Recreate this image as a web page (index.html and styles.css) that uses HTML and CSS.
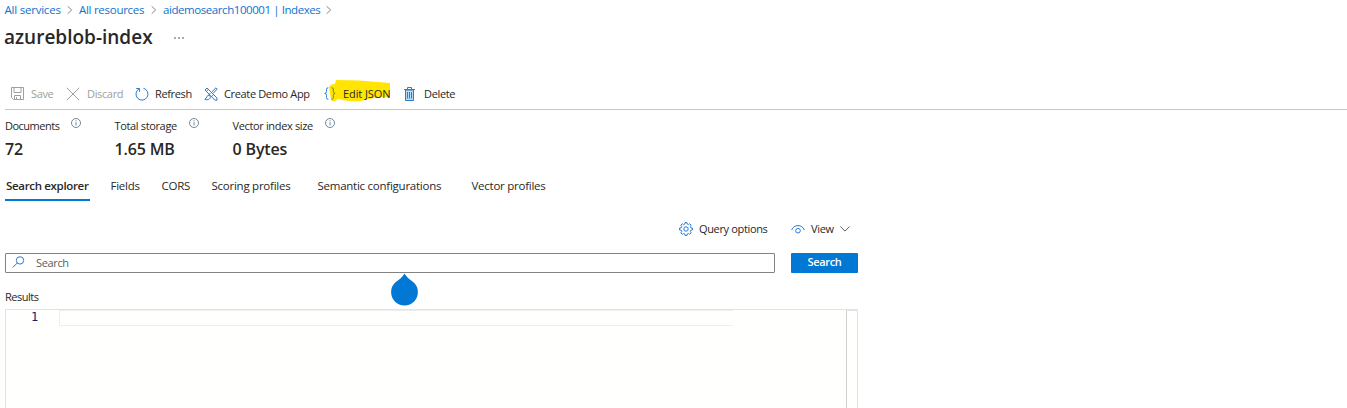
FILE: index.html
```html
<!DOCTYPE html>
<html lang="en">
<head>
<meta charset="utf-8">
<title>azureblob-index</title>
<link rel="stylesheet" href="styles.css">
</head>
<body>
<nav class="crumbs">
  <a class="c1">All services</a><svg width="6" height="8" viewBox="0 0 6 8"><path d="M.7 .3 4.7 4 .7 7.7"/></svg>
  <a class="c2">All resources</a><svg width="6" height="8" viewBox="0 0 6 8"><path d="M.7 .3 4.7 4 .7 7.7"/></svg>
  <a class="c3">aidemosearch100001 | Indexes</a><svg width="6" height="8" viewBox="0 0 6 8"><path d="M.7 .3 4.7 4 .7 7.7"/></svg>
</nav>
<header class="heading"><h1>azureblob-index</h1><span class="more"><i></i><i></i><i></i></span></header>
<div class="toolbar">
  <span class="tool off"><svg width="13" height="13" viewBox="0 0 13 13"><path d="M.5.5h12v12h-10l-2-2zM3 .5v5h7v-5M3.500 12.500V8.500h6v4M5.500 10v2"/></svg></span>
  <span class="off save">Save</span>
  <span class="tool off"><svg width="14" height="14" viewBox="0 0 14 14"><path d="m.8.8 12.4 12.4M13.2.8.8 13.2"/></svg></span>
  <span class="off discard">Discard</span>
  <span class="tool"><svg width="14" height="14" viewBox="0 0 14 14"><path d="M8.500 1.300A6 6 0 1 1 4 1.900M1.200 1.500H4.600V4.900"/></svg></span>
  <span class="refresh">Refresh</span>
  <span class="tool tools"><svg width="14" height="14" viewBox="0 0 14 14"><path d="m1 3 2-2 9.800 9.800.3 2.400-2.400-.2zM4.300 2.500 2.600 4.200M12 .8 8 4.700M13.200 2 9.200 6.300M12 .8l1.200 1.200M5.100 8.100C2.800 8 3.200 10.800.8 12.400c2.900 1 5.800-.3 5.600-2.600M5.100 8.100l1.300 1.700M9.600 7.600 7.500 9.700M6.500 6 5 7.600"/></svg></span>
  <span class="demo">Create Demo App</span>
  <span class="tool json"><svg class="marker" width="63" height="24" viewBox="0 0 63 24"><path d="M8 0 31 .5 62 3V17Q46 17 33 21Q21 22 10 19Q6 23 3 20L1 7Q2 4 7 4Z"/></svg><svg width="13" height="13" viewBox="0 0 13 13"><path d="M4.300.7Q2.500.7 2.500 2.300v2.200Q2.500 6.400.7 6.400q1.800 0 1.800 2v2.200q0 1.700 1.800 1.700"/><path class="green" d="M7.500.7q1.800 0 1.800 1.600v2.200q0 1.900 1.800 1.900-1.800 0-1.800 2v2.200q0 1.700-1.800 1.700"/></svg></span>
  <span class="edit">Edit JSON</span>
  <span class="tool"><svg width="11" height="14" viewBox="0 0 11 14"><path class="bin" d="M1.500 3v10.500h8V3z"/><path d="M0 2.500h11M3.500 2.500v-2h4v2"/><path class="slats" d="M3.500 5v6.500M5.500 5v6.500M7.500 5v6.500"/></svg></span>
  <span class="delete">Delete</span>
</div>
<section class="stats">
  <div><div class="label"><span class="documents">Documents</span><svg width="10" height="10" viewBox="0 0 10 10"><circle cx="5" cy="5" r="4.5"/><path d="M5 4.2v3.3M5 2.3v1"/></svg></div><b>72</b></div>
  <div><div class="label"><span class="storage">Total storage</span><svg width="10" height="10" viewBox="0 0 10 10"><circle cx="5" cy="5" r="4.5"/><path d="M5 4.2v3.3M5 2.3v1"/></svg></div><b>1.65 MB</b></div>
  <div><div class="label"><span class="vector">Vector index size</span><svg width="10" height="10" viewBox="0 0 10 10"><circle cx="5" cy="5" r="4.5"/><path d="M5 4.2v3.3M5 2.3v1"/></svg></div><b>0 Bytes</b></div>
</section>
<nav class="tabs">
  <span class="active">Search explorer</span><span>Fields</span><span>CORS</span><span>Scoring profiles</span><span>Semantic configurations</span><span>Vector profiles</span>
</nav>
<main>
  <div class="options">
    <svg width="14" height="14" viewBox="0 0 14 14"><path d="M5.8 2 6 .6h2L8.2 2l1.3.6 1.2-.9 1.5 1.5-.9 1.2.5 1.4 1.6.2v2l-1.6.2-.5 1.4.9 1.2-1.500 1.500-1.200-.9-1.300.6-.2 1.400H6L5.800 12l-1.300-.6-1.200.9-1.500-1.500.9-1.200-.5-1.400L.6 8V6l1.600-.2.5-1.400-.9-1.200 1.500-1.500 1.200.9z"/><circle cx="7" cy="7" r="2.200"/></svg>
    <span class="query">Query options</span>
    <svg width="14" height="9" viewBox="0 0 14 9"><path d="M.6 5C1.800 2 4.200.6 7 .6S12.200 2 13.400 5"/><circle cx="7" cy="5.700" r="2.300"/></svg>
    <span class="view">View</span>
    <svg class="chev" width="10" height="6" viewBox="0 0 10 6"><path d="M.4.5 5 5.100 9.600.5"/></svg>
  </div>
  <div class="searchrow">
    <div class="box"><svg width="13" height="12" viewBox="0 0 13 12"><circle cx="8" cy="4.400" r="3.700"/><path d="M5.300 7 .6 11.500"/></svg><span>Search</span>
      <svg class="drop" width="28" height="33" viewBox="0 0 28 33"><path d="M14.500 .5C16 3.500 20 7 23.500 9.200A13.400 13.400 0 1 1 5.500 9.200C9 7 13 3.500 14.500 .5Z"/></svg></div>
    <div class="button">Search</div>
  </div>
  <div class="results"><span>Results</span></div>
  <div class="editor"><span class="line">1</span><span class="current"></span><span class="ruler"></span></div>
</main>
</body>
</html>
```
FILE: styles.css
```css
* { box-sizing: border-box; }
body { margin: 0; width: 1347px; height: 408px; overflow: hidden; background: #fff; color: #292827; font: 11.5px/16px "Open Sans", "Noto Sans", sans-serif; white-space: nowrap; }
svg { display: block; flex: none; fill: none; stroke: #2b7cd3; stroke-width: 1; overflow: visible; }
.crumbs { display: grid; grid-template-columns: 62.5px 12px 72px 12px 163px 6px; align-items: center; height: 20px; padding-left: 4.5px; color: #0f72cf; }
.crumbs svg { stroke: #888; }
.c1 { letter-spacing: -.22px; }
.c2 { letter-spacing: -.28px; }
.c3 { letter-spacing: -.43px; }
.heading { display: flex; align-items: center; height: 34px; padding-left: 4px; }
h1 { margin: 0; width: 170px; font-size: 19px; line-height: 34px; font-weight: 600; }
.more { display: flex; gap: 2px; padding-top: 2px; }
.more i { width: 2px; height: 2px; background: #aaa; }
.toolbar, .label, .options, .box, .button, .results { font-size: 11px; letter-spacing: -.35px; }
.toolbar { display: grid; grid-template-columns: 20px 35px 21px 48px 20px 50px 19px 100px 19px 61px 20px 60px; align-items: center; height: 32px; width: 1342px; margin: 24px 0 0 5px; padding-left: 6px; border-bottom: 1px solid #c8c6c4; }
.tool { position: relative; }
.tools { left: -1px; }
.off { color: #a09e9c; }
.off svg { stroke: #a09e9c; }
.json svg { position: relative; }
.json .marker { position: absolute; left: 4px; top: -7px; stroke: none; fill: #ffe500; }
.json .green { stroke: #5a9140; }
.edit { position: relative; letter-spacing: -.1px; }
.bin { fill: #b8dcf5; }
.stats { display: grid; grid-template-columns: 109.5px 118px 120px; height: 52px; padding: 8px 0 0 5px; }
.label { display: flex; justify-content: space-between; height: 16px; }
.label svg { stroke: #71899a; }
.stats > :nth-child(1) .label { width: 76px; }
.stats > :nth-child(2) .label { width: 84.5px; }
.stats > :nth-child(3) .label { width: 102.5px; }
.documents { letter-spacing: -.5px; }
.stats b { display: block; margin-top: 4px; font-size: 16px; line-height: 22px; font-weight: 600; letter-spacing: -.15px; }
.tabs { display: grid; grid-template-columns: 105.5px 51px 50px 106px 154px 80px; height: 40px; padding: 16px 0 0 5px; line-height: 16px; letter-spacing: -.25px; }
.active { width: 85px; height: 23px; padding-left: 1px; border-bottom: 2px solid #0078d4; font-weight: 600; letter-spacing: -.33px; }
main { width: 858px; padding-left: 5px; }
.options { display: grid; grid-template-columns: 20px 92px 20px 29px 10px; align-items: center; height: 16px; margin: 19px 0 0 674px; }
.chev { stroke: #605e5c; }
.searchrow { display: flex; justify-content: space-between; margin-top: 16px; }
.box { position: relative; display: flex; align-items: center; gap: 11px; width: 770px; height: 20px; padding-left: 6px; border: 1px solid #85827f; border-radius: 1px; color: #605e5c; }
.box > svg:first-child { margin-top: -3px; }
.box .drop { position: absolute; left: 384px; top: 19px; stroke: none; fill: #0078d4; }
.button { width: 67px; height: 20px; border-radius: 1px; background: #0078d4; color: #fff; font-weight: 600; line-height: 18px; text-align: center; }
.results { height: 36px; padding-top: 16px; letter-spacing: -.5px; }
.editor { display: grid; grid-template-columns: 53px 674px 1fr 11px; height: 99px; border: 1px solid #e3e3e3; border-bottom: 0; background: #fffffe; }
.line { padding-left: 25px; color: #0b216f; font: 12px/15px "DejaVu Sans Mono", monospace; }
.current { height: 16px; border: 1px solid #eee; border-right: 0; }
.ruler { grid-column: 4; border-left: 1px solid #d0d0d0; border-top: 1px solid #e3e3e3; }
```
